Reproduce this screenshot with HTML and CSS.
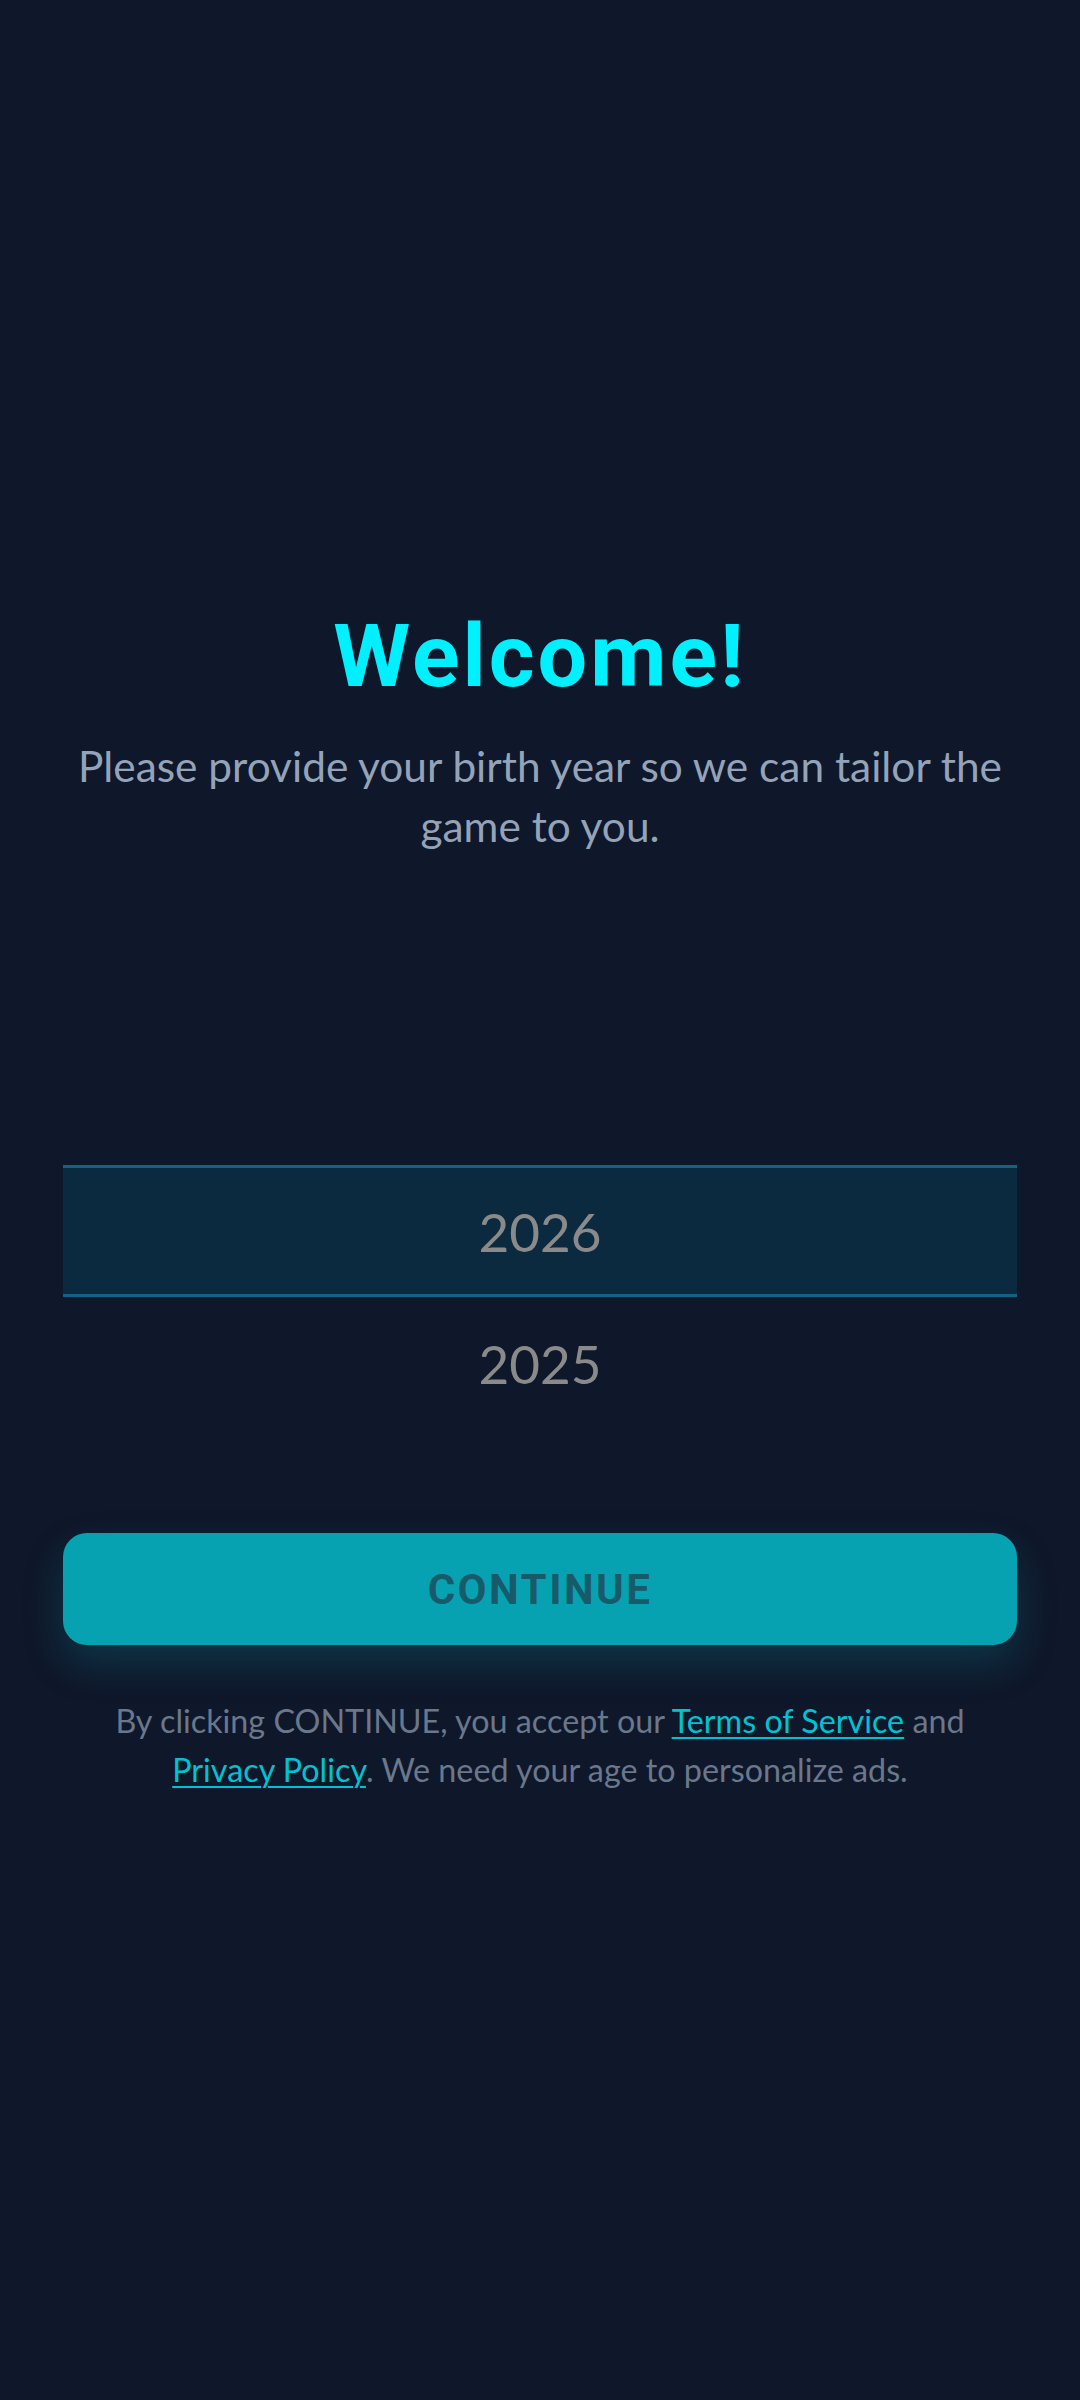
FILE: index.html
```html
<!DOCTYPE html>
<html lang="en">
<head>
<meta charset="utf-8">
<title>Welcome</title>
<link rel="stylesheet" href="styles.css">
</head>
<body>
<main class="screen">
  <h1 class="title">Welcome!</h1>
  <p class="subtitle">Please provide your birth year so we can tailor the game to you.</p>
  <div class="picker">
    <div class="picker-row"></div>
    <div class="picker-row selected">2026</div>
    <div class="picker-row">2025</div>
  </div>
  <button class="continue">CONTINUE</button>
  <p class="terms">By clicking CONTINUE, you accept our <a href="#">Terms of Service</a> and <a href="#">Privacy Policy</a>. We need your age to personalize ads.</p>
</main>
</body>
</html>
```
FILE: styles.css
```css
html, body {
  margin: 0;
  padding: 0;
  background: #0F172A;
}
.screen {
  min-height: 2400px;
  box-sizing: border-box;
  padding: 604px 63px 0;
  display: flex;
  flex-direction: column;
  align-items: stretch;
  font-family: "Lato", "Noto Sans", sans-serif;
}
.title {
  margin: 0;
  font-family: "Roboto", "Liberation Sans", sans-serif;
  font-weight: 700;
  font-size: 88px;
  line-height: 104px;
  letter-spacing: 3px;
  color: #00F0FF;
  text-align: center;
}
.subtitle {
  margin: 28px 0 0;
  font-size: 42.4px;
  line-height: 60px;
  color: #94A3B8;
  text-align: center;
}
.picker {
  margin-top: 177px;
  display: flex;
  flex-direction: column;
}
.picker-row {
  height: 132px;
  box-sizing: border-box;
  display: flex;
  align-items: center;
  justify-content: center;
  font-size: 53px;
  color: #8A8A8A;
}
.picker-row.selected {
  background: #0B2A40;
  border-top: 3px solid #0E6485;
  border-bottom: 3px solid #0E6485;
}
.continue {
  margin-top: 104px;
  height: 112px;
  border: none;
  border-radius: 24px;
  background: #07A2B1;
  color: #175A6A;
  font-family: "Roboto", "Liberation Sans", sans-serif;
  font-weight: 700;
  font-size: 42px;
  letter-spacing: 2.5px;
  box-shadow: 0 18px 40px rgba(7, 162, 177, 0.22);
  padding: 0;
}
.terms {
  margin: 51px auto 0;
  max-width: 900px;
  font-size: 32.3px;
  line-height: 49px;
  color: #6B778A;
  text-align: center;
}
.terms a {
  color: #00C2D4;
  text-decoration: underline;
  text-underline-offset: 4px;
  text-decoration-thickness: 2px;
}
```
